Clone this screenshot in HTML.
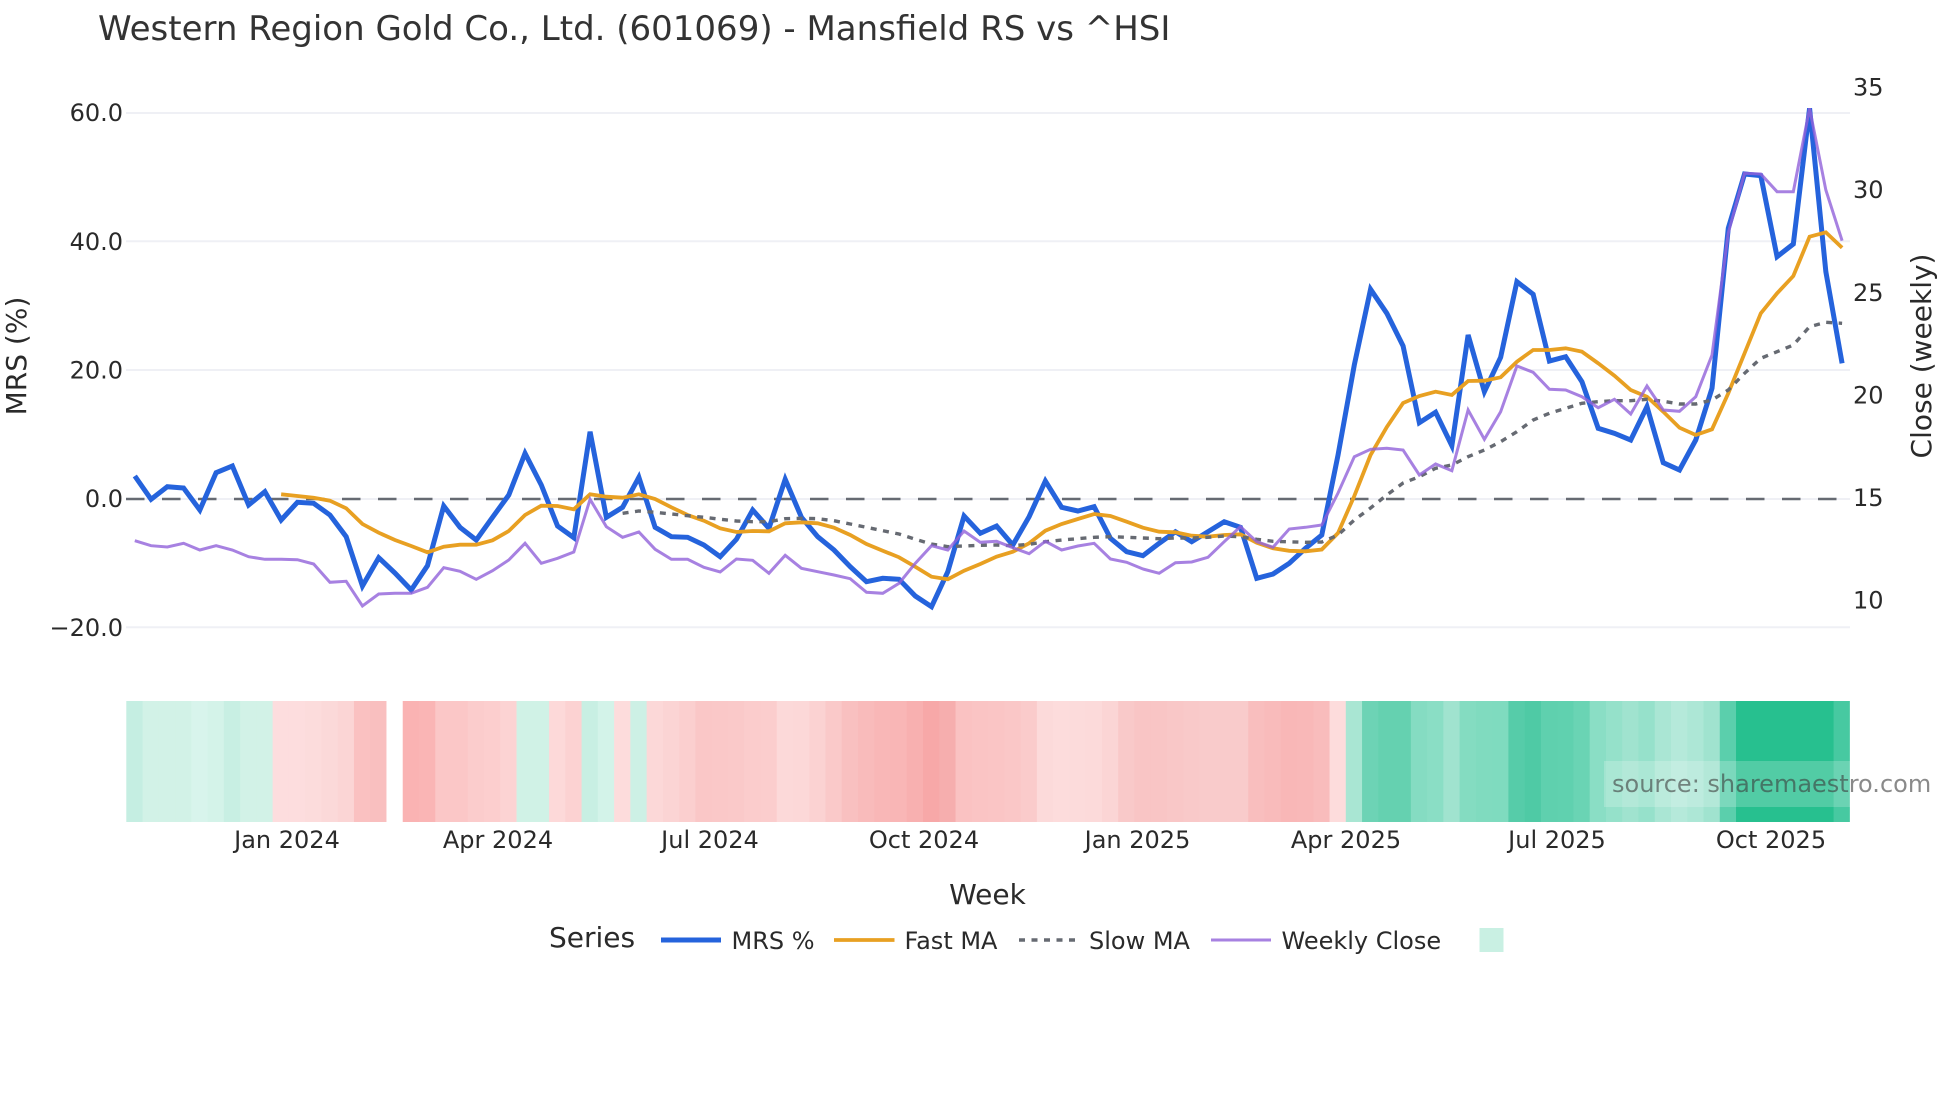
<!DOCTYPE html>
<html><head><meta charset="utf-8"><title>Western Region Gold Co., Ltd. (601069) - Mansfield RS vs ^HSI</title>
<style>
html,body{margin:0;padding:0;background:#fff;width:1960px;height:1102px;overflow:hidden}
svg{display:block}
text{font-family:"DejaVu Sans","Liberation Sans",sans-serif;fill:#2a2a2a}
.t{font-size:24px}
polyline{fill:none;vector-effect:non-scaling-stroke;stroke-linejoin:miter;stroke-miterlimit:4}
</style></head><body>
<svg width="1960" height="1102" viewBox="0 0 1960 1102" xmlns="http://www.w3.org/2000/svg">
<text x="98" y="40" font-size="34" style="fill:#333">Western Region Gold Co., Ltd. (601069) - Mansfield RS vs ^HSI</text>

<g stroke="#eff0f5" stroke-width="2">
<line x1="126" x2="1850" y1="113" y2="113"/>
<line x1="126" x2="1850" y1="241.3" y2="241.3"/>
<line x1="126" x2="1850" y1="370" y2="370"/>
<line x1="126" x2="1850" y1="499" y2="499"/>
<line x1="126" x2="1850" y1="627.3" y2="627.3"/>
</g>

<g class="t" text-anchor="end">
<text class="t" x="123" y="121">60.0</text>
<text class="t" x="123" y="250">40.0</text>
<text class="t" x="123" y="378.5">20.0</text>
<text class="t" x="123" y="507">0.0</text>
<text class="t" x="123" y="636">−20.0</text>
</g>
<g>
<text class="t" x="1853" y="95.5">35</text>
<text class="t" x="1853" y="198">30</text>
<text class="t" x="1853" y="301">25</text>
<text class="t" x="1853" y="403.5">20</text>
<text class="t" x="1853" y="506">15</text>
<text class="t" x="1853" y="608.5">10</text>
</g>
<text transform="translate(26,356) rotate(-90)" font-size="28" text-anchor="middle">MRS (%)</text>
<text transform="translate(1931,356) rotate(-90)" font-size="28" text-anchor="middle">Close (weekly)</text>

<g transform="translate(126.3,701) scale(16.26,121)" shape-rendering="geometricPrecision">
<rect x="0" width="1.03" height="1" fill="#c5eee2"/><rect x="1" width="1.03" height="1" fill="#d2f2e7"/><rect x="2" width="1.03" height="1" fill="#d2f2e7"/><rect x="3" width="1.03" height="1" fill="#d2f2e7"/><rect x="4" width="1.03" height="1" fill="#d8f4ec"/><rect x="5" width="1.03" height="1" fill="#d4f3e9"/><rect x="6" width="1.03" height="1" fill="#c8efe3"/><rect x="7" width="1.03" height="1" fill="#d2f2e7"/><rect x="8" width="1.03" height="1" fill="#d2f2e7"/>
<rect x="9" width="1.03" height="1" fill="#fdddde"/><rect x="10" width="1.03" height="1" fill="#fdddde"/><rect x="11" width="1.03" height="1" fill="#fcdcdc"/><rect x="12" width="1.03" height="1" fill="#fbd9d9"/><rect x="13" width="1.03" height="1" fill="#fbd5d5"/><rect x="14" width="1.03" height="1" fill="#fac1c1"/><rect x="15" width="1" height="1" fill="#f9bfbf"/>
<rect x="17" width="1.03" height="1" fill="#fab3b3"/><rect x="18" width="1.03" height="1" fill="#fab5b5"/><rect x="19" width="1.03" height="1" fill="#fbc7c7"/><rect x="20" width="1.03" height="1" fill="#fbc7c7"/><rect x="21" width="1.03" height="1" fill="#fbcccc"/><rect x="22" width="1.03" height="1" fill="#fccece"/><rect x="23" width="1.03" height="1" fill="#fcd3d3"/>
<rect x="24" width="1.03" height="1" fill="#d0f2e6"/><rect x="25" width="1.03" height="1" fill="#d0f2e6"/><rect x="26" width="1.03" height="1" fill="#fdd9d9"/><rect x="27" width="1.03" height="1" fill="#fcd2d2"/><rect x="28" width="1.03" height="1" fill="#c8efe3"/><rect x="29" width="1.03" height="1" fill="#d3f3e9"/><rect x="30" width="1.03" height="1" fill="#fddcdc"/><rect x="31" width="1.03" height="1" fill="#cdf0e5"/>
<rect x="32" width="1.03" height="1" fill="#fcd8d8"/><rect x="33" width="1.03" height="1" fill="#fbd4d4"/><rect x="34" width="1.03" height="1" fill="#fbcfcf"/><rect x="35" width="1.03" height="1" fill="#fac7c7"/><rect x="36" width="1.03" height="1" fill="#fac8c8"/><rect x="37" width="1.03" height="1" fill="#fac9c9"/><rect x="38" width="1.03" height="1" fill="#fbcccc"/><rect x="39" width="1.03" height="1" fill="#fbcdcd"/><rect x="40" width="1.03" height="1" fill="#fcd9d9"/><rect x="41" width="1.03" height="1" fill="#fcd8d8"/><rect x="42" width="1.03" height="1" fill="#fbd2d2"/><rect x="43" width="1.03" height="1" fill="#fac9c9"/><rect x="44" width="1.03" height="1" fill="#f9c0c0"/><rect x="45" width="1.03" height="1" fill="#f9bbbb"/><rect x="46" width="1.03" height="1" fill="#f9b7b7"/><rect x="47" width="1.03" height="1" fill="#f9b6b6"/><rect x="48" width="1.03" height="1" fill="#f8b0b0"/><rect x="49" width="1.03" height="1" fill="#f7a8a8"/><rect x="50" width="1.03" height="1" fill="#f6aeae"/>
<rect x="51" width="1.03" height="1" fill="#fac2c2"/><rect x="52" width="1.03" height="1" fill="#fac4c4"/><rect x="53" width="1.03" height="1" fill="#fac5c5"/><rect x="54" width="1.03" height="1" fill="#fac7c7"/><rect x="55" width="1.03" height="1" fill="#facbcb"/><rect x="56" width="1.03" height="1" fill="#fcdada"/><rect x="57" width="1.03" height="1" fill="#fddcdc"/><rect x="58" width="1.03" height="1" fill="#fcdbdb"/><rect x="59" width="1.03" height="1" fill="#fcdada"/><rect x="60" width="1.03" height="1" fill="#fbd5d5"/><rect x="61" width="1.03" height="1" fill="#f9c9c9"/><rect x="62" width="1.03" height="1" fill="#f9c5c5"/><rect x="63" width="1.03" height="1" fill="#f9c5c5"/><rect x="64" width="1.03" height="1" fill="#f9c7c7"/><rect x="65" width="1.03" height="1" fill="#f9c9c9"/><rect x="66" width="1.03" height="1" fill="#f9cbcb"/><rect x="67" width="1.03" height="1" fill="#f9cbcb"/><rect x="68" width="1.03" height="1" fill="#f9cbcb"/><rect x="69" width="1.03" height="1" fill="#f9bebe"/><rect x="70" width="1.03" height="1" fill="#f9bbbb"/><rect x="71" width="1.03" height="1" fill="#f9b7b7"/><rect x="72" width="1.03" height="1" fill="#f9b8b8"/><rect x="73" width="1.03" height="1" fill="#f9bcbc"/><rect x="74" width="1.03" height="1" fill="#fddcdc"/>
<rect x="75" width="1.03" height="1" fill="#a9e6d3"/><rect x="76" width="1.03" height="1" fill="#6dd3b5"/><rect x="77" width="1.03" height="1" fill="#65d1b0"/><rect x="78" width="1.03" height="1" fill="#65d1b0"/><rect x="79" width="1.03" height="1" fill="#85dcc2"/><rect x="80" width="1.03" height="1" fill="#8adec5"/><rect x="81" width="1.03" height="1" fill="#a0e3cf"/><rect x="82" width="1.03" height="1" fill="#84dcc1"/><rect x="83" width="1.03" height="1" fill="#80dbbf"/><rect x="84" width="1.03" height="1" fill="#7fdbbf"/><rect x="85" width="1.03" height="1" fill="#56cca9"/><rect x="86" width="1.03" height="1" fill="#4fcaa5"/><rect x="87" width="1.03" height="1" fill="#5fd0ae"/><rect x="88" width="1.03" height="1" fill="#60d1af"/><rect x="89" width="1.03" height="1" fill="#6ad4b4"/><rect x="90" width="1.03" height="1" fill="#8adec5"/><rect x="91" width="1.03" height="1" fill="#95e1ca"/><rect x="92" width="1.03" height="1" fill="#a0e3cf"/><rect x="93" width="1.03" height="1" fill="#96e1cb"/><rect x="94" width="1.03" height="1" fill="#aae6d4"/><rect x="95" width="1.03" height="1" fill="#b5e9da"/><rect x="96" width="1.03" height="1" fill="#ade7d6"/><rect x="97" width="1.03" height="1" fill="#a0e3cf"/><rect x="98" width="1.03" height="1" fill="#5bcfac"/><rect x="99" width="6.03" height="1" fill="#27c08f"/><rect x="105" width="1" height="1" fill="#47c9a1"/>
</g>
<rect x="1604" y="761" width="246" height="46" fill="#fff" fill-opacity=".2"/>

<line x1="126" x2="1850" y1="499" y2="499" stroke="#666a72" stroke-width="2.6" stroke-dasharray="18.5 17.5"/>

<g transform="translate(134.8,0) scale(16.26,1)">
<polyline stroke="#2563dc" stroke-width="5" points="0,476 1,499.3 2,486.7 3,488 4,510 5,472.7 6,466 7,505 8,491.7 9,520 10,502.3 11,503.3 12,515 13,536.7 14,586 15,557.7 16,573 17,590 18,565.7 19,506 20,527.3 21,540 22,517.3 23,495 24,453.3 25,485 26,526 27,537.7 28,431.7 29,517.3 30,507.3 31,477.3 32,527.3 33,536.7 34,537.3 35,545 36,556.7 37,539.3 38,510 39,528.3 40,479.3 41,517.3 42,536.7 43,550 44,566.7 45,581.7 46,578.3 47,579.3 48,596 49,606.7 50,571.7 51,516 52,533.3 53,526 54,545 55,516.7 56,481 57,507.3 58,511 59,506.7 60,538.3 61,551.7 62,555.7 63,543.3 64,531.7 65,541.7 66,531.7 67,521.7 68,527.3 69,578.3 70,574 71,563.3 72,548.3 73,535 74,455 75,365 76,289.3 77,313.3 78,346 79,422.7 80,412.3 81,445.7 82,335 83,391.7 84,357.3 85,281.7 86,294.3 87,361 88,356.7 89,381.7 90,428.3 91,433.3 92,440 93,406.7 94,462.7 95,470 96,440 97,388.3 98,228.3 99,174 100,175.7 101,256.7 102,244 103,108.3 104,271.7 105,363.3"/>
<polyline stroke="#e8a022" stroke-width="3.8" points="9,494.3 10,496 11,497.7 12,500.7 13,508.3 14,524 15,532.7 16,540 17,546 18,552.3 19,546.7 20,544.7 21,544.7 22,540.3 23,531 24,515 25,505.7 26,506 27,509.3 28,494.3 29,496.7 30,497.7 31,494.3 32,499 33,507.3 34,515 35,520.7 36,528.3 37,532 38,531 39,531.3 40,523.3 41,522.3 42,523.3 43,527.7 44,535 45,544 46,550.7 47,557.3 48,566.7 49,576.7 50,579.3 51,570.7 52,564 53,556.7 54,551.7 55,543.3 56,530.7 57,524 58,519 59,514 60,516 61,521.7 62,527.7 63,531.7 64,532.3 65,535.7 66,536.7 67,535 68,534.3 69,542.7 70,548.3 71,550.8 72,551.3 73,549.5 74,533 75,496 76,455 77,427 78,403 79,396 80,391.7 81,395 82,381 83,380.7 84,377.3 85,361.7 86,350 87,350 88,348.3 89,351.7 90,363.3 91,375.7 92,390 93,396.7 94,411.7 95,427.7 96,435 97,429.3 98,393.3 99,353.3 100,313.3 101,293.3 102,276 103,236.7 104,232.3 105,247.7"/>
<polyline stroke="#666a72" stroke-width="3.4" stroke-dasharray="6 6.5" points="30,513.3 31,511 32,512.3 33,514 34,515.7 35,517.3 36,519.3 37,521 38,521.7 39,521.7 40,518.7 41,518.3 42,518.7 43,520.7 44,524 45,527.3 46,530.7 47,534 48,539.3 49,544 50,546.7 51,546 52,545.3 53,545 54,545.7 55,544.3 56,541.7 57,540 58,538.7 59,537.3 60,536.7 61,537.3 62,538 63,538.7 64,538 65,538 66,537.3 67,536 68,536.7 69,539.3 70,541.3 71,541.8 72,542.3 73,542 74,535 75,520 76,508 77,495 78,483 79,476.7 80,468.3 81,465 82,456.7 83,450 84,441.7 85,431.7 86,420 87,413.3 88,408.3 89,403.3 90,401.7 91,400.7 92,400.7 93,399.3 94,401.3 95,404 96,404 97,400 98,390 99,373.3 100,358.3 101,351.7 102,345 103,326.7 104,322.3 105,323.3"/>
<polyline stroke="#9162da" stroke-opacity=".8" stroke-width="3" points="0,540.7 1,545.7 2,547 3,543.3 4,550 5,545.7 6,550 7,556.7 8,559.3 9,559.3 10,559.7 11,564 12,582.3 13,581.3 14,606 15,594 16,593.3 17,593.3 18,587.3 19,567.7 20,571.3 21,579.3 22,570.7 23,560 24,543.3 25,563.3 26,558.3 27,552 28,499.3 29,526.7 30,537.3 31,532 32,549.3 33,559.3 34,559.3 35,567.3 36,572 37,559 38,560.3 39,573.3 40,555.3 41,568.3 42,571.7 43,575 44,578.7 45,592.3 46,593.3 47,583.3 48,563.3 49,545.7 50,550 51,531 52,542.3 53,541.3 54,547.7 55,553.7 56,541.3 57,550 58,546 59,543.3 60,559 61,562.3 62,569 63,573.3 64,562.7 65,562 66,557.3 67,541.7 68,526.7 69,541.7 70,547.3 71,529 72,527.3 73,525 74,493 75,456.7 76,449.3 77,448.3 78,450 79,475 80,464 81,470.7 82,410 83,439.3 84,411.7 85,366 86,372.3 87,389.3 88,390 89,396.7 90,407.7 91,399.3 92,414 93,386 94,410 95,411.3 96,396.7 97,355 98,233 99,173.3 100,174 101,191.7 102,191.7 103,108.3 104,190 105,240.7"/>
</g>

<text x="1612" y="792" font-size="24" style="fill:#3c3c3c;fill-opacity:.6">source: sharemaestro.com</text>

<g text-anchor="middle">
<text class="t" x="287" y="848">Jan 2024</text>
<text class="t" x="498" y="848">Apr 2024</text>
<text class="t" x="710" y="848">Jul 2024</text>
<text class="t" x="924" y="848">Oct 2024</text>
<text class="t" x="1137.5" y="848">Jan 2025</text>
<text class="t" x="1346" y="848">Apr 2025</text>
<text class="t" x="1557" y="848">Jul 2025</text>
<text class="t" x="1771" y="848">Oct 2025</text>
<text x="987.5" y="904" font-size="28">Week</text>
</g>

<text x="549" y="947" font-size="28">Series</text>
<line x1="661" x2="721" y1="940" y2="940" stroke="#2563dc" stroke-width="5"/>
<text class="t" x="731.5" y="949">MRS %</text>
<line x1="834" x2="894.5" y1="940" y2="940" stroke="#e8a022" stroke-width="3.8"/>
<text class="t" x="904.5" y="949">Fast MA</text>
<line x1="1019" x2="1075" y1="940" y2="940" stroke="#666a72" stroke-width="3.4" stroke-dasharray="6 6.5"/>
<text class="t" x="1089" y="949">Slow MA</text>
<line x1="1211" x2="1271" y1="940" y2="940" stroke="#9162da" stroke-opacity=".8" stroke-width="3"/>
<text class="t" x="1281.5" y="949">Weekly Close</text>
<rect x="1479.5" y="928" width="24" height="24" fill="#c9f0e3"/>
</svg>
</body></html>
